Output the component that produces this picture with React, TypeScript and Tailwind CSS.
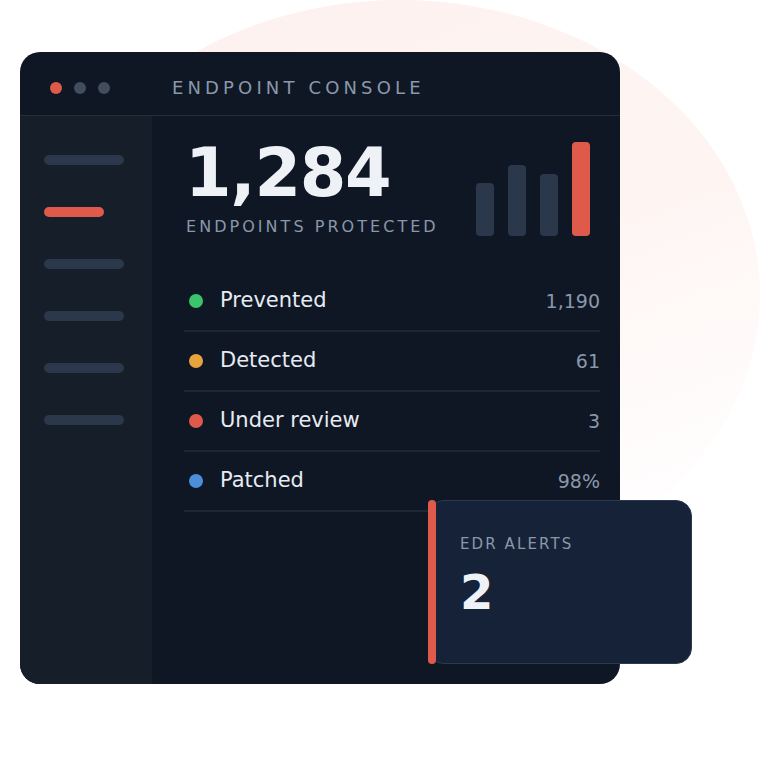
import React from "react";

const rows = [
  { label: "Prevented", value: "1,190", color: "bg-[#3cc46c]" },
  { label: "Detected", value: "61", color: "bg-[#e8a43c]" },
  { label: "Under review", value: "3", color: "bg-[#e05a4c]" },
  { label: "Patched", value: "98%", color: "bg-[#4a8fd8]" },
];

export default function App() {
  return (
    <div
      className="relative w-[760px] h-[784px] bg-white overflow-hidden"
      style={{ fontFamily: '"DejaVu Sans", sans-serif' }}
    >
      <div className="absolute left-[40px] top-[0px] w-[720px] h-[590px] rounded-[50%] bg-[linear-gradient(160deg,#fdf1ee_0%,#fef5f3_50%,#ffffff_90%)]" />
      <div className="relative pt-[52px] pl-[20px]">
        <div className="w-[600px] h-[632px] rounded-[20px] bg-[#0f1724] overflow-hidden flex flex-col">
          <div className="h-[64px] shrink-0 border-b border-[#232d3b] flex items-center pl-[30px] pt-[8px]">
            <div className="flex gap-[12px]">
              <span className="w-[12px] h-[12px] rounded-full bg-[#e05a4c]" />
              <span className="w-[12px] h-[12px] rounded-full bg-[#414c5c]" />
              <span className="w-[12px] h-[12px] rounded-full bg-[#414c5c]" />
            </div>
            <span className="ml-[62px] text-[18px] tracking-[0.23em] text-[#8a98aa]">ENDPOINT CONSOLE</span>
          </div>
          <div className="flex flex-1">
            <div className="w-[132px] shrink-0 bg-[#151e29] pt-[39px] pl-[24px] flex flex-col gap-[42px]">
              <span className="w-[80px] h-[10px] rounded-full bg-[#2b384b]" />
              <span className="w-[60px] h-[10px] rounded-full bg-[#e05a4c]" />
              <span className="w-[80px] h-[10px] rounded-full bg-[#2b384b]" />
              <span className="w-[80px] h-[10px] rounded-full bg-[#2b384b]" />
              <span className="w-[80px] h-[10px] rounded-full bg-[#2b384b]" />
              <span className="w-[80px] h-[10px] rounded-full bg-[#2b384b]" />
            </div>
            <div className="flex-1 pl-[32px] pr-[20px] pt-[21px]">
              <div className="flex items-start justify-between">
                <div className="flex flex-col">
                  <span className="text-[67px] font-bold leading-[72px] tracking-[-0.02em] text-[#eef2f7] ml-[1px]">1,284</span>
                  <span className="mt-[6px] text-[16px] tracking-[0.19em] text-[#8a98aa] ml-[2px]">ENDPOINTS PROTECTED</span>
                </div>
                <div className="flex items-end gap-[14px] h-[94px] mt-[5px] mr-[10px]">
                  <span className="w-[18px] h-[53px] rounded-[4px] bg-[#2b384b]" />
                  <span className="w-[18px] h-[71px] rounded-[4px] bg-[#2b384b]" />
                  <span className="w-[18px] h-[62px] rounded-[4px] bg-[#2b384b]" />
                  <span className="w-[18px] h-[94px] rounded-[4px] bg-[#e05a4c]" />
                </div>
              </div>
              <div className="mt-[33px] flex flex-col">
                {rows.map((r) => (
                  <div key={r.label} className="h-[60px] border-b-2 border-[#1c2634] flex items-center">
                    <span className={`w-[14px] h-[14px] rounded-full ml-[5px] ${r.color}`} />
                    <span className="ml-[17px] text-[21px] text-[#e6ebf2]">{r.label}</span>
                    <span className="ml-auto text-[19px] text-[#8a98aa]">{r.value}</span>
                  </div>
                ))}
              </div>
            </div>
          </div>
        </div>
        <div className="absolute left-[428px] top-[500px] w-[264px] h-[164px] rounded-[16px] bg-[#162238] border border-[#2a3a50] pl-[31px] pt-[32px]">
          <div className="text-[15px] tracking-[0.14em] text-[#8a98aa]">EDR ALERTS</div>
          <div className="mt-[10px] text-[48px] font-bold leading-[52px] text-[#eef2f7]">2</div>
        </div>
        <div className="absolute left-[428px] top-[500px] w-[8px] h-[164px] rounded-full bg-[#e05a4c]" />
      </div>
    </div>
  );
}
